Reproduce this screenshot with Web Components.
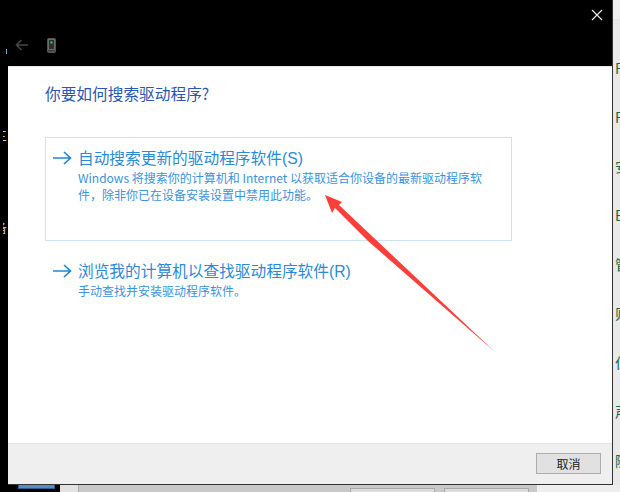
<!DOCTYPE html>
<html lang="zh-CN"><head><meta charset="utf-8"><title>更新驱动程序</title>
<style>
html,body{margin:0;padding:0;width:620px;height:492px;overflow:hidden;background:#000}
body{font-family:"Noto Sans CJK SC","Liberation Sans",sans-serif}
</style></head><body>
<template id="t-scene"><style>
:host{display:grid;grid-template-columns:8px 605px 7px;grid-template-rows:485px 7px;width:620px;height:492px;position:relative;overflow:hidden;background:#000}
.l{background:#000;overflow:hidden;position:relative;display:flex;flex-direction:column;align-items:flex-end;color:#c9d3dc;font-size:12px;line-height:14px}
.l i{display:block;width:1px;height:5px;background:#5fb6cf;margin-top:49px;margin-right:1px}
.l span{white-space:nowrap;margin-right:0;width:5px;overflow:hidden;text-indent:-8px}
.l .a{margin-top:75px}.l .b{margin-top:78px}
.r{background:linear-gradient(#f0f0f0 0 19px,#dbe6f0 19px 20px,#e9e9e9 20px);overflow:hidden;padding-top:44px;box-sizing:border-box;font-size:14px;line-height:49px;color:#0f6b47;padding-left:2px}
.r span{display:block;white-space:nowrap}
.b2{grid-column:1/4;display:flex;background:#eee}
.b2 .blk{width:60px;background:#000;display:flex;justify-content:flex-start}
.b2 .blk i{display:block;margin-left:18px;width:37px;height:4px;background:#5a8cc0;border:1px solid #2d5e96;border-top:0;box-sizing:border-box}
.b2 .gr{width:477px;background:#c9c9c9;display:flex;padding-top:3px;box-sizing:border-box}
.b2 .tab{width:18px;background:#e2e2e2;border-right:1px solid #a9a9a9;margin-top:-3px}
.b2 .btn{height:4px;width:85px;background:#dcdcdc;border:1px solid #a8a8a8;border-bottom:0;box-sizing:border-box}
.b2 .b1{margin-left:271px}.b2 .bb{margin-left:9px}
</style>
<div class="l"><i></i><span class="a">三</span><span class="b">备</span></div>
<slot></slot>
<div class="r"><span>F</span><span>F</span><span>安</span><span>E</span><span>管</span><span>则</span><span>仁</span><span>声</span><span>随</span></div>
<div class="b2"><div class="blk"><i></i></div><div class="gr"><div class="tab"></div><div class="btn b1"></div><div class="btn bb"></div></div></div>
<slot name="overlay"></slot></template>

<template id="t-dialog"><style>
:host{display:flex;flex-direction:column;background:#fff;border-right:1px solid #333;border-bottom:1px solid #333;box-sizing:border-box;height:485px}
.top{height:66px;flex:none}
.main{flex:1;min-height:0;display:flex;flex-direction:column;padding:16px 100px 0 37px;box-sizing:border-box;border-top:1px solid #e9e9e9}
h1{margin:0;font-weight:400;font-size:15.700px;line-height:22px;color:#2b55b0}
.links{display:flex;flex-direction:column;margin-top:32px;gap:9px}
</style>
<div class="top"><slot name="title"></slot></div>
<div class="main"><h1><slot name="heading"></slot></h1><div class="links"><slot></slot></div></div>
<slot name="footer"></slot></template>

<template id="t-title"><style>
:host{display:flex;height:66px;background:#000;box-sizing:border-box;padding:0 9px 0 7px}
.row{display:flex;align-items:center;gap:18px;margin-top:24px;height:42px;align-self:flex-start}
.row svg{display:block}
.x{margin-left:auto;margin-top:9px;display:block}
</style>
<div class="row"><svg width="14" height="12" viewBox="0 0 14 12"><path d="M13 6H1.500M6.500 1 1.500 6l5 5" fill="none" stroke="#454545" stroke-width="1.600"/></svg>
<svg width="9" height="15" viewBox="0 0 9 15"><rect x=".5" y=".5" width="8" height="14" rx="1" fill="#6b6b6b" stroke="#555"/><rect x="2" y="2" width="5" height="9" fill="#2f2f2f"/><rect x="3.500" y="3.500" width="2" height="2" fill="#2fd65a"/><rect x="1" y="12" width="7" height="1.500" fill="#3a3a3a"/></svg></div>
<svg class="x" width="12" height="12" viewBox="0 0 12 12"><path d="M1 1l10 10M11 1 1 11" stroke="#e6e6e6" stroke-width="1.200" fill="none"/></svg></template>

<template id="t-link"><style>
:host{display:grid;grid-template-columns:20px 1fr;align-content:start;column-gap:6px;padding:8px 6px 0 6px;box-sizing:border-box;border:1px solid transparent}
:host([selected]){border-color:#cfe2f3;height:104px}
svg{display:block;margin-top:5px}
.t{font-size:15.700px;line-height:23px;color:#2a8ad8;white-space:nowrap}
.d{font-size:12px;line-height:17px;color:#3a93dc;white-space:pre-line;margin-top:-1px}
</style>
<svg width="20" height="14" viewBox="0 0 20 14"><path d="M1 7h17M12 1l6.500 6-6.500 6" fill="none" stroke="#1f86d6" stroke-width="1.700"/></svg>
<div class="t"><slot name="label"></slot></div><span></span><div class="d"><slot></slot></div></template>

<template id="t-footer"><style>
:host{display:flex;justify-content:flex-end;align-items:flex-start;height:41px;flex:none;background:#efefef;border-top:1px solid #e4e4e4;box-sizing:border-box;padding:9px 11px 0 0}
</style><slot></slot></template>

<template id="t-button"><style>
:host{display:flex;align-items:center;justify-content:center;width:65px;height:21px;box-sizing:border-box;background:#e1e1e1;border:1px solid #adadad;font-size:12px;color:#222}
</style><slot></slot></template>

<template id="t-arrow"><style>
:host{display:block;position:absolute;left:0;top:0;width:620px;height:492px;pointer-events:none}
svg{display:block}
</style><svg width="620" height="492" viewBox="0 0 620 492"><polygon points="325,195 342,202 339,205 495,352 368,241 335,208 332,213" fill="#fa3e3a"/></svg></template>

<desktop-scene>
  <wizard-dialog>
    <wizard-title slot="title"></wizard-title>
    <span slot="heading">你要如何搜索驱动程序?</span>
    <command-link selected><span slot="label">自动搜索更新的驱动程序软件<span style="font-family:'Liberation Sans'">(S)</span></span>Windows 将搜索你的计算机和 Internet 以获取适合你设备的最新驱动程序软
件&#xFF0C;除非你已在设备安装设置中禁用此功能。</command-link>
    <command-link><span slot="label">浏览我的计算机以查找驱动程序软件<span style="font-family:'Liberation Sans'">(R)</span></span>手动查找并安装驱动程序软件。</command-link>
    <wizard-footer slot="footer"><wizard-button>取消</wizard-button></wizard-footer>
  </wizard-dialog>
  <annotation-arrow slot="overlay"></annotation-arrow>
</desktop-scene>
<script>
[['desktop-scene','t-scene'],['wizard-dialog','t-dialog'],['wizard-title','t-title'],['command-link','t-link'],['wizard-footer','t-footer'],['wizard-button','t-button'],['annotation-arrow','t-arrow']].forEach(([n,t])=>{
  customElements.define(n,class extends HTMLElement{constructor(){super();this.attachShadow({mode:'open'}).appendChild(document.getElementById(t).content.cloneNode(true));}});
});
</script>
</body></html>
